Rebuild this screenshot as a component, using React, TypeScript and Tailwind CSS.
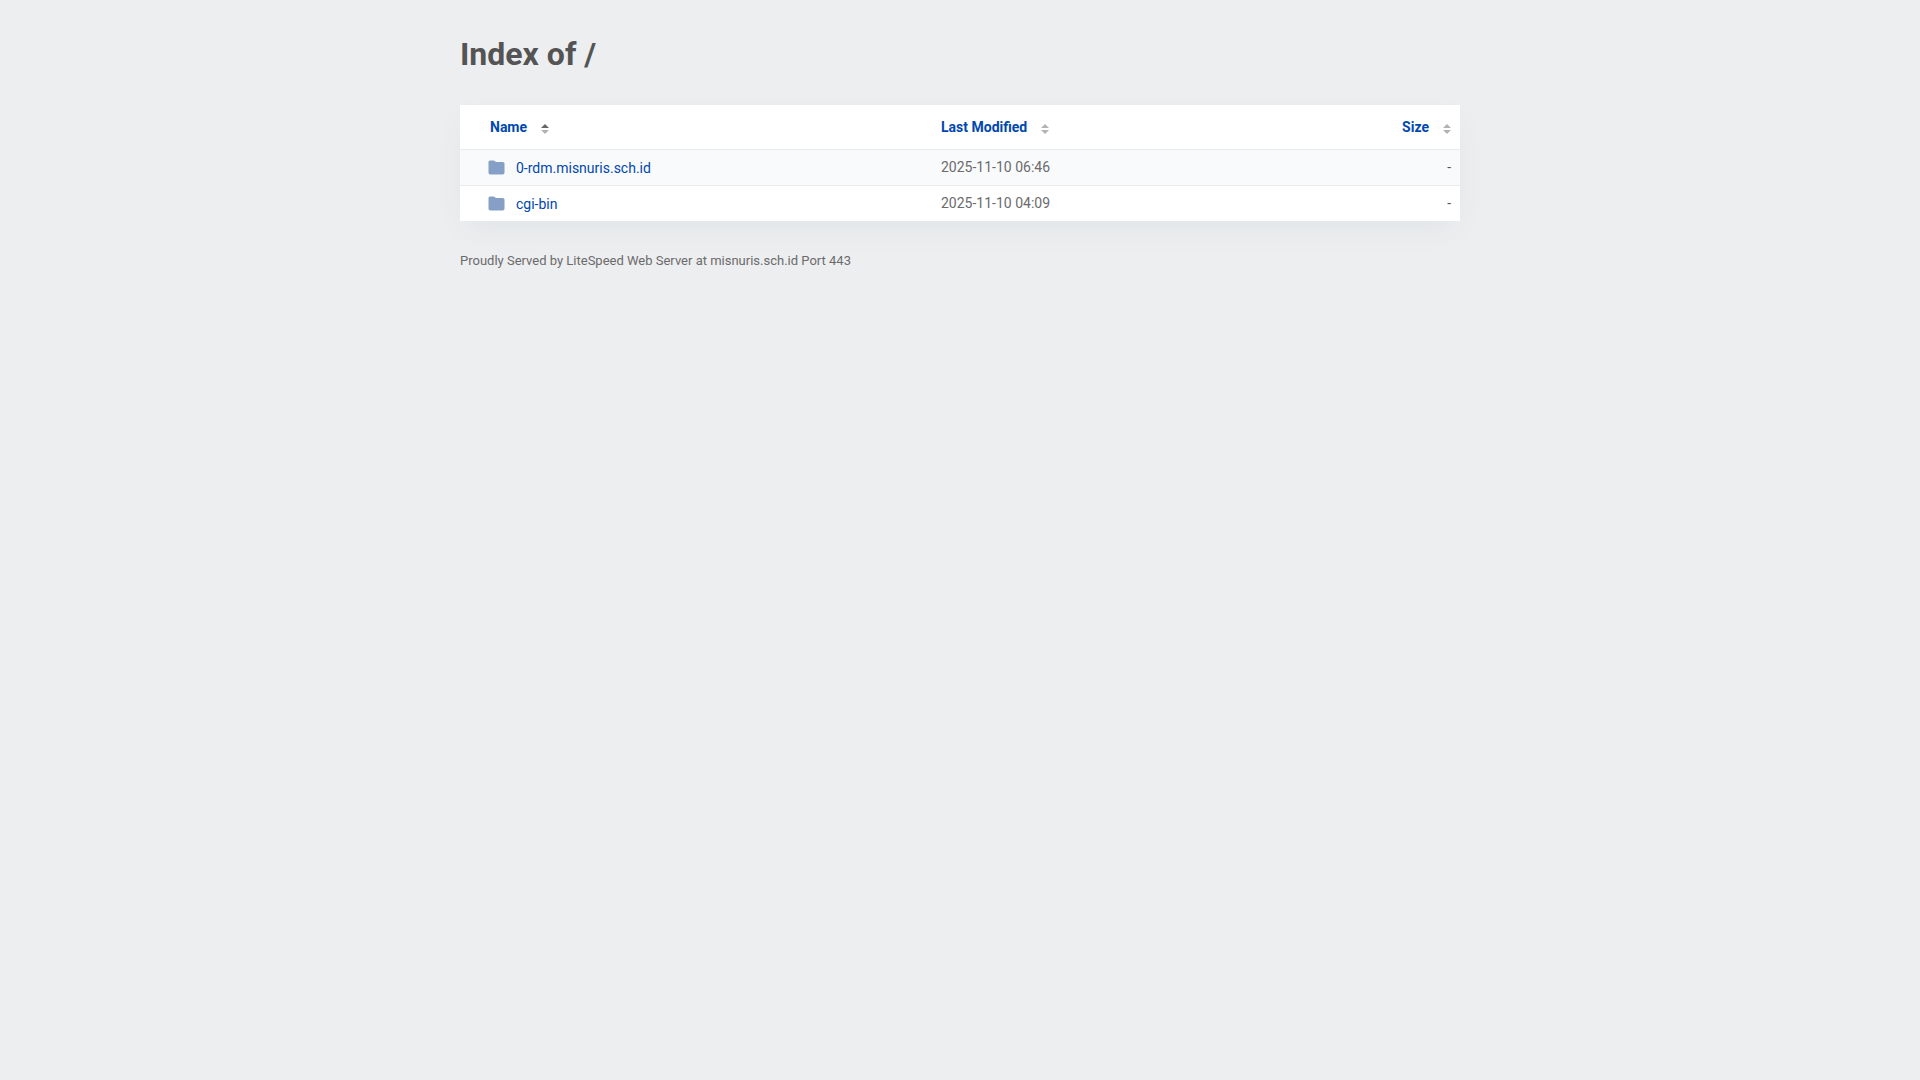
import React from "react";

type Entry = {
  name: string;
  modified: string;
  size: string;
};

const entries: Entry[] = [
  { name: "0-rdm.misnuris.sch.id", modified: "2025-11-10 06:46", size: "-" },
  { name: "cgi-bin", modified: "2025-11-10 04:09", size: "-" },
];

const SortIcon: React.FC<{ active?: boolean }> = ({ active }) => (
  <svg
    width="8"
    height="10"
    viewBox="0 0 8 10"
    className="mt-1 ml-[14px] shrink-0"
    aria-hidden="true"
  >
    <path d="M0 4 4 0l4 4z" fill={active ? "#666666" : "#b3b3b3"} />
    <path d="M0 6h8L4 10z" fill="#b3b3b3" />
  </svg>
);

const FolderIcon: React.FC = () => (
  <svg
    width="17"
    height="15"
    viewBox="0 0 17 15"
    className="mr-[11px] mb-0.5 shrink-0"
    aria-hidden="true"
  >
    <path
      d="M2.300.5H5.500c.6 0 1 .2 1.300.6l.4.500c.2.300.5.400.9.400h6.400c1.200 0 2 .7 2 1.800v8.700c0 1.200-.7 1.900-1.900 1.900H2.400C1.200 14.400.5 13.700.5 12.500V2.300C.5 1.200 1.200.5 2.300.5z"
      fill="#869fc6"
    />
  </svg>
);

const App: React.FC = () => {
  return (
    <div className="min-h-screen bg-[#edeef0] px-4 font-['Roboto',sans-serif] text-sm text-[#545454]">
      <main className="mx-auto max-w-[1000px] pt-[35px]">
        <h1 className="mb-8 text-[32px] leading-[38px] font-bold">Index of /</h1>

        <table className="w-full border-collapse bg-white text-left shadow-[0_10px_30px_-4px_rgba(0,80,80,0.06)]">
          <thead>
            <tr className="h-11 text-[#0047b0]">
              <th className="w-[45%] pl-[30px] font-bold">
                <button type="button" className="flex items-center">
                  Name
                  <SortIcon active />
                </button>
              </th>
              <th className="w-[35%] pl-[31px] font-bold">
                <button type="button" className="flex items-center">
                  Last Modified
                  <SortIcon />
                </button>
              </th>
              <th className="w-[20%] pr-[9px] font-bold">
                <button type="button" className="ml-auto flex items-center">
                  Size
                  <SortIcon />
                </button>
              </th>
            </tr>
          </thead>
          <tbody>
            {entries.map((entry) => (
              <tr
                key={entry.name}
                className="h-9 border-t border-[#e9ebec] odd:bg-[#f9fafc]"
              >
                <td className="pt-0.5 pl-7">
                  <a href="#" className="flex items-center text-[#0047b0]">
                    <FolderIcon />
                    {entry.name}
                  </a>
                </td>
                <td className="pl-[31px] text-[#6b6b6b]">{entry.modified}</td>
                <td className="pr-[9px] text-right">{entry.size}</td>
              </tr>
            ))}
          </tbody>
        </table>

        <footer className="mt-[30px] text-[13px] leading-5 text-[#6b6b6b]">
          Proudly Served by LiteSpeed Web Server at misnuris.sch.id Port 443
        </footer>
      </main>
    </div>
  );
};

export default App;
